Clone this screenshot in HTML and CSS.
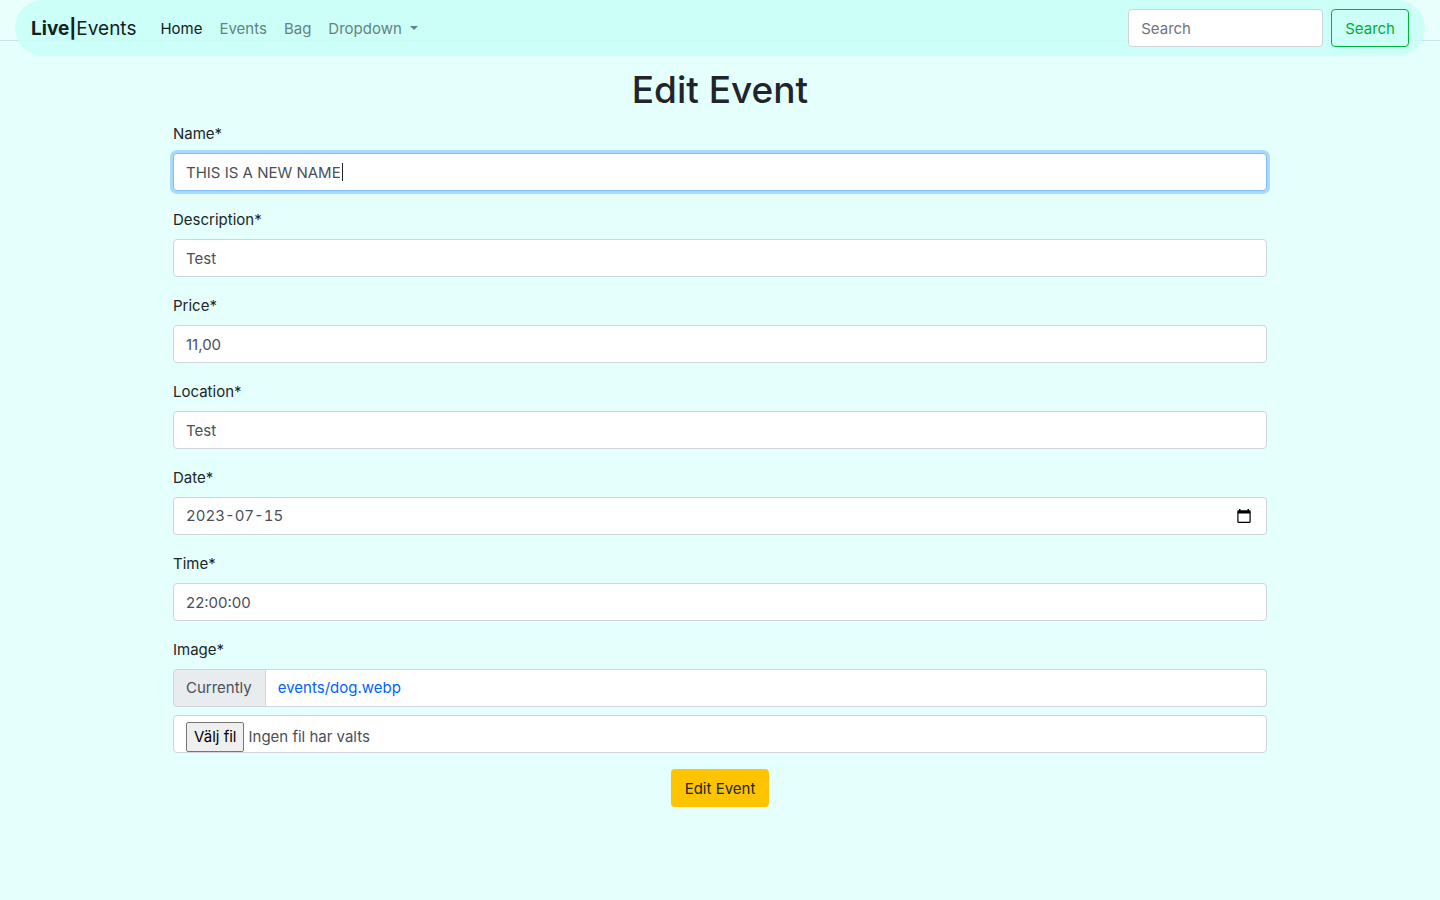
FILE: index.html
```html
<!DOCTYPE html>
<html lang="sv">
<head>
<meta charset="utf-8">
<meta name="viewport" content="width=device-width, initial-scale=1">
<title>Edit Event</title>
<link rel="stylesheet" href="styles.css">
</head>
<body>
<header class="site-header">
  <nav class="navbar">
    <a class="navbar-brand" href="#"><strong>Live|</strong>Events</a>
    <ul class="navbar-nav">
      <li><a class="nav-link active" href="#">Home</a></li>
      <li><a class="nav-link" href="#">Events</a></li>
      <li><a class="nav-link" href="#">Bag</a></li>
      <li><a class="nav-link dropdown-toggle" href="#">Dropdown</a></li>
    </ul>
    <form class="search-form">
      <input class="form-control search-input" type="search" placeholder="Search" aria-label="Search">
      <button class="btn btn-outline" type="submit">Search</button>
    </form>
  </nav>
</header>
<main class="container">
  <h1 class="title">Edit Event</h1>
  <form class="event-form">
    <div class="form-group">
      <label for="name">Name*</label>
      <div class="caret-field">
        <input class="form-control" id="name" type="text" value="THIS IS A NEW NAME" autofocus>
        <span class="caret" aria-hidden="true"></span>
      </div>
    </div>
    <div class="form-group">
      <label for="description">Description*</label>
      <input class="form-control" id="description" type="text" value="Test">
    </div>
    <div class="form-group">
      <label for="price">Price*</label>
      <input class="form-control" id="price" type="text" value="11,00">
    </div>
    <div class="form-group">
      <label for="location">Location*</label>
      <input class="form-control" id="location" type="text" value="Test">
    </div>
    <div class="form-group">
      <label for="date">Date*</label>
      <div class="form-control date-control">
        <input class="date-input" id="date" type="text" value="2023-07-15">
        <button class="date-button" type="button" aria-label="Show calendar">
          <svg width="14" height="15" viewBox="0 0 14 15" aria-hidden="true"><path fill="#000" fill-rule="evenodd" d="M2 0h1.500v1.300h7V0H12v1.300h.5q1.200 0 1.200 1.200v10.300q0 1.200-1.200 1.200h-11Q.3 14 .3 12.800V2.500Q.3 1.300 1.500 1.300H2zM1.500 4.500v8.300h11V4.500z"/></svg>
        </button>
      </div>
    </div>
    <div class="form-group">
      <label for="time">Time*</label>
      <input class="form-control" id="time" type="text" value="22:00:00">
    </div>
    <div class="form-group">
      <label for="image">Image*</label>
      <div class="input-group">
        <span class="input-group-text">Currently</span>
        <div class="form-control current-file"><a href="#">events/dog.webp</a></div>
      </div>
      <div class="form-control file-control">
        <input class="visually-hidden" id="image" type="file">
        <label class="file-button" for="image">Välj fil</label>
        <span>Ingen fil har valts</span>
      </div>
    </div>
    <button class="btn btn-warning" type="submit">Edit Event</button>
  </form>
</main>
<script src="script.js"></script>
</body>
</html>
```
FILE: styles.css
```css
*, *::before, *::after { box-sizing: border-box; }

body {
  margin: 0;
  background: #e4fffc;
  color: #212529;
  font-family: Inter, "Liberation Sans", sans-serif;
  font-size: 15px;
  line-height: 24px;
}

a { color: #0062ff; text-decoration: none; }

input, button { font: inherit; }

.site-header {
  height: 41px;
  border-bottom: 1px solid #cbe2e0;
  background: #e8fffc;
}

.navbar {
  display: flex;
  align-items: center;
  margin: 0 15px;
  padding: 8px 16px;
  border-radius: 28px;
  background: rgba(201, 255, 247, 0.9);
}

.navbar-brand {
  margin-right: 16px;
  padding: 6px 0 4px;
  color: #14201f;
  font-size: 19px;
  line-height: 30px;
}

.navbar-nav {
  display: flex;
  flex: 1;
  gap: 1px;
  margin: 0;
  padding: 0;
  list-style: none;
}

.nav-link {
  display: block;
  padding: 9px 8px 7px;
  color: #658280;
}

.nav-link.active { color: #14201f; }

.dropdown-toggle::after {
  content: "";
  display: inline-block;
  margin-left: 8px;
  vertical-align: 4px;
  border-top: 4px solid;
  border-right: 4px solid transparent;
  border-left: 4px solid transparent;
}

.search-form { display: flex; gap: 8px; }

.form-control {
  display: block;
  width: 100%;
  height: 38px;
  padding: 6px 12px;
  border: 1px solid #ced4da;
  border-radius: 4px;
  background: #fff;
  color: #495057;
}

.form-control::placeholder { color: #6c757d; opacity: 1; }

.form-control:focus {
  border-color: #80bdff;
  outline: 0;
  box-shadow: 0 0 0 3px #aad9fe;
}

.search-input { width: 195px; }

.caret-field {
  position: relative;
  caret-color: transparent;
}

.caret {
  position: absolute;
  top: 10px;
  left: 169px;
  width: 1px;
  height: 18px;
  background: #212529;
}

.btn {
  padding: 7px 13px 5px;
  border: 1px solid transparent;
  border-radius: 4px;
  line-height: 24px;
}

.btn-outline {
  border-color: #00b33c;
  background: transparent;
  color: #00ab3a;
}

.btn-warning {
  align-self: center;
  background: #ffc400;
  color: #212529;
}

.container {
  max-width: 1110px;
  margin: 0 auto;
  padding: 25px 8px;
}

.title {
  margin: 0 0 8px;
  font-size: 37px;
  font-weight: 500;
  line-height: 48px;
  text-align: center;
}

.event-form {
  display: flex;
  flex-direction: column;
  gap: 16px;
}

.form-group {
  display: flex;
  flex-direction: column;
  gap: 7px;
}

.form-group + .form-group { padding-top: 1px; }

.date-control {
  display: flex;
  align-items: center;
}

.date-input {
  flex: 1;
  min-width: 0;
  padding: 0;
  border: 0;
  background: transparent;
  color: inherit;
  font-variant-numeric: tabular-nums;
}

.date-button {
  display: flex;
  padding: 0 3px;
  border: 0;
  background: transparent;
}

.input-group { display: flex; margin-bottom: 1px; }

.input-group-text {
  padding: 6px 13px 6px 12px;
  border: 1px solid #ced4da;
  border-radius: 4px 0 0 4px;
  background: #e9ecef;
  color: #495057;
}

.current-file {
  flex: 1;
  border-left: 0;
  border-radius: 0 4px 4px 0;
}

.file-control {
  display: flex;
  align-items: center;
  gap: 4px;
  padding: 6px 12px 0;
}

.file-button {
  padding: 2px 7px;
  border: 1px solid #767676;
  border-radius: 2px;
  background: #efefef;
  color: #000;
}

.visually-hidden {
  position: absolute;
  width: 1px;
  height: 1px;
  overflow: hidden;
  clip-path: inset(50%);
}
```
FILE: script.js
```js
const nameInput = document.getElementById("name");
nameInput.focus();
nameInput.setSelectionRange(nameInput.value.length, nameInput.value.length);
```
